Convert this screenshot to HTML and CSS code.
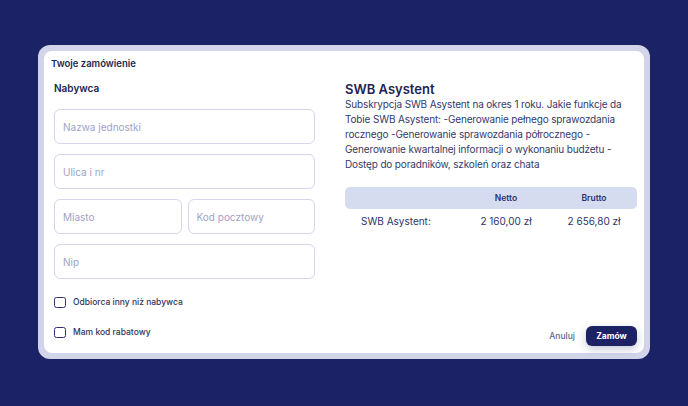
FILE: index.html
```html
<!DOCTYPE html>
<html lang="pl">
<head>
    <meta charset="UTF-8">
    <meta name="viewport" content="width=device-width, initial-scale=1.0">
    <title>Twoje zamówienie</title>
    <link rel="stylesheet" href="styles.css">
</head>
<body>
    <div class="frame">
        <div class="card">
            <h1 class="card-title">Twoje zamówienie</h1>
            <div class="content">
                <form class="buyer">
                    <h2 class="section-title">Nabywca</h2>
                    <input class="field" type="text" placeholder="Nazwa jednostki">
                    <input class="field" type="text" placeholder="Ulica i nr">
                    <div class="field-row">
                        <input class="field" type="text" placeholder="Miasto">
                        <input class="field" type="text" placeholder="Kod pocztowy">
                    </div>
                    <input class="field" type="text" placeholder="Nip">
                    <label class="check"><input type="checkbox"> Odbiorca inny niż nabywca</label>
                    <label class="check"><input type="checkbox"> Mam kod rabatowy</label>
                </form>

                <div class="summary">
                    <h2 class="product-title">SWB Asystent</h2>
                    <p class="product-desc">Subskrypcja SWB Asystent na okres 1 roku. Jakie funkcje da Tobie SWB Asystent: -Generowanie pełnego sprawozdania rocznego -Generowanie sprawozdania półrocznego - Generowanie kwartalnej informacji o wykonaniu budżetu - Dostęp do poradników, szkoleń oraz chata</p>

                    <div class="prices">
                        <div class="prices-head">
                            <span></span>
                            <span>Netto</span>
                            <span>Brutto</span>
                        </div>
                        <div class="prices-row">
                            <span>SWB Asystent:</span>
                            <span>2 160,00 zł</span>
                            <span>2 656,80 zł</span>
                        </div>
                    </div>

                    <div class="actions">
                        <button type="button" class="btn-link">Anuluj</button>
                        <button type="button" class="btn-primary">Zamów</button>
                    </div>
                </div>
            </div>
        </div>
    </div>
</body>
</html>
```

FILE: styles.css
```css
* {
    box-sizing: border-box;
}
body {
    margin: 0;
    padding: 45px 0 0 38px;
    background: #1b2266;
    font-family: Inter, "Noto Sans", sans-serif;
    color: #262b5c;
    height: 406px;
    overflow: hidden;
}
.frame {
    width: 612px;
    height: 314px;
    padding: 6px;
    background: #d2d5ea;
    border-radius: 12px;
}
.card {
    height: 100%;
    background: #fff;
    border-radius: 8px;
    padding: 6px 7px 7px 7px;
    display: flex;
    flex-direction: column;
}
.card-title {
    margin: 0;
    font-size: 9.5px;
    line-height: 13px;
    font-weight: 600;
    color: #22264f;
}
.content {
    flex: 1;
    display: grid;
    grid-template-columns: 261px 292px;
    column-gap: 30px;
    padding: 11px 0 0 3px;
}
.buyer {
    display: flex;
    flex-direction: column;
    gap: 10px;
}
.section-title {
    margin: 0 0 4px;
    font-size: 10px;
    line-height: 14px;
    font-weight: 600;
    color: #22264f;
}
.field {
    display: block;
    width: 100%;
    height: 35px;
    margin: 0;
    padding: 0 8px;
    border: 1px solid #d3d6ec;
    border-radius: 6px;
    font-family: inherit;
    font-size: 10px;
    color: #262b5c;
    outline: none;
}
.field::placeholder {
    color: #9ea3c6;
}
.field-row {
    display: flex;
    gap: 6px;
}
.field-row .field {
    flex: 1;
    min-width: 0;
}
.check {
    display: flex;
    align-items: center;
    gap: 7px;
    height: 14px;
    font-size: 8.5px;
    font-weight: 500;
    color: #2e3462;
}
.check:first-of-type {
    margin-top: 6px;
}
.check + .check {
    margin-top: 6px;
}
.check input {
    appearance: none;
    margin: 0;
    width: 12px;
    height: 11px;
    border: 1.5px solid #2d3372;
    border-radius: 2.5px;
}
.summary {
    display: flex;
    flex-direction: column;
}
.product-title {
    margin: 0;
    font-size: 13px;
    line-height: 16px;
    font-weight: 600;
    color: #1f2350;
}
.product-desc {
    margin: 0;
    font-size: 10px;
    line-height: 15px;
    letter-spacing: -0.15px;
    color: #353a6b;
}
.prices {
    margin-top: 15px;
    font-size: 10px;
}
.prices-head,
.prices-row {
    display: grid;
    grid-template-columns: 1fr 90px 86px;
    align-items: center;
}
.prices-head {
    height: 22px;
    background: #d6dcef;
    border-radius: 5px;
    font-size: 8.5px;
    font-weight: 600;
    color: #2b3170;
    text-align: center;
}
.prices-row {
    height: 24px;
    color: #2e3466;
    font-weight: 400;
}
.prices-row span {
    text-align: center;
}
.prices-row span:first-child {
    text-align: left;
    padding-left: 16px;
}
.actions {
    margin-top: auto;
    display: flex;
    justify-content: flex-end;
    align-items: center;
    gap: 11px;
}
.btn-link {
    border: none;
    background: none;
    padding: 0;
    font-family: inherit;
    font-size: 8.5px;
    font-weight: 500;
    color: #5d638f;
    cursor: pointer;
}
.btn-primary {
    width: 51px;
    height: 20px;
    border: none;
    border-radius: 6px;
    background: #1c2264;
    color: #fff;
    font-family: inherit;
    font-size: 8.5px;
    font-weight: 700;
    box-shadow: 0 3px 8px rgba(28, 34, 100, 0.25);
    cursor: pointer;
}
```
